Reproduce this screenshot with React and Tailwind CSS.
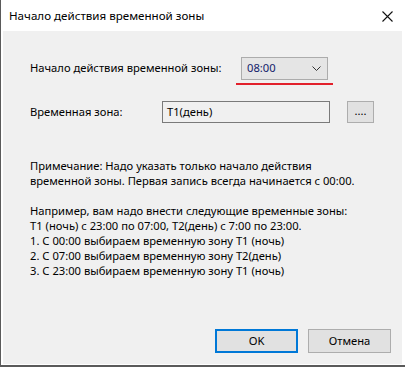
import React from 'react';

const font = { fontFamily: '"Noto Sans", "Open Sans", sans-serif' };

const TimeZoneDialog = () => {
  return (
    <div
      className="w-[405px] h-[367px] bg-white border-l border-b-2 border-[#5a5a5a] flex flex-col text-[11.2px] text-black"
      style={font}
    >
      {/* title bar */}
      <div className="h-[31px] flex items-center justify-between pl-[8px] pr-[12px]">
        <span className="leading-none text-[11.6px]">Начало действия временной зоны</span>
        <svg width="11" height="11" viewBox="0 0 11 11" className="mt-[1px]">
          <path d="M0.5 0.5 L10.5 10.5 M10.5 0.5 L0.5 10.5" stroke="#111" strokeWidth="1.1" fill="none" />
        </svg>
      </div>

      {/* body */}
      <div className="ml-[2px] mr-[3px] mb-px flex-1 bg-[#f0f0f0] flex flex-col pl-[27px] pr-[11px] pt-[26px] pb-[11px]">
        <div className="flex items-center h-[23px]">
          <span className="w-[211px]">Начало действия временной зоны:</span>
          <div className="relative">
            <div className="w-[87px] h-[23px] bg-[#e5e5e5] border border-[#acacac] flex items-center justify-between pl-[5px] pr-[6px]">
              <span className="text-[#12206a]">08:00</span>
              <svg width="9" height="5" viewBox="0 0 9 5">
                <path d="M0.5 0.5 L4.5 4.5 L8.5 0.5" stroke="#333" strokeWidth="1" fill="none" />
              </svg>
            </div>
            <div className="absolute left-[-5px] top-[26px] w-[97px] h-[2px] bg-[#e2202b]" />
          </div>
        </div>

        <div className="flex items-center mt-[21px]">
          <span className="w-[132px]">Временная зона:</span>
          <div className="w-[168px] h-[22px] border border-[#7a7a7a] bg-[#f0f0f0] flex items-center pl-[4px]">
            T1(день)
          </div>
          <div className="ml-[17px] w-[27px] h-[22px] bg-[#e1e1e1] border border-[#adadad] flex items-center justify-center leading-none pb-[3px]">
            ....
          </div>
        </div>

        <div className="mt-[35px] leading-[15px]">
          <p>Примечание: Надо указать только начало действия</p>
          <p>временной зоны. Первая запись всегда начинается с 00:00.</p>
          <p className="mt-[15px]">Например, вам надо внести следующие временные зоны:</p>
          <p>T1 (ночь) с 23:00 по 07:00, T2(день) с 7:00 по 23:00.</p>
          <p>1. С 00:00 выбираем временную зону T1 (ночь)</p>
          <p>2. С 07:00 выбираем временную зону T2(день)</p>
          <p>3. С 23:00 выбираем временную зону T1 (ночь)</p>
        </div>

        <div className="mt-auto flex justify-end gap-[10px]">
          <button className="w-[83px] h-[24px] bg-[#e1e1e1] border-2 border-[#0078d7] flex items-center justify-center">
            OK
          </button>
          <button className="w-[83px] h-[24px] bg-[#e1e1e1] border border-[#adadad] flex items-center justify-center">
            Отмена
          </button>
        </div>
      </div>
    </div>
  );
};

export default function App() {
  return <TimeZoneDialog />;
}
